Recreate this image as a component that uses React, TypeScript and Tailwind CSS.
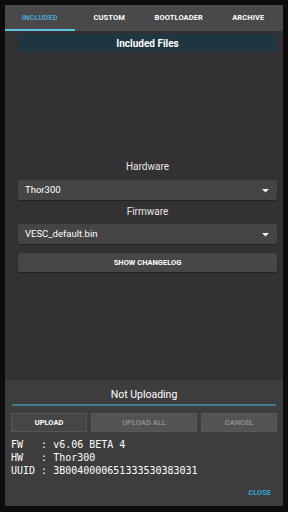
import React from 'react';

const tabs = ['INCLUDED', 'CUSTOM', 'BOOTLOADER', 'ARCHIVE'];

const Combo: React.FC<{ value: string }> = ({ value }) => (
  <div className="flex h-[20px] items-center justify-between rounded-[2px] bg-[#454445] pl-[7px] pr-[7px] shadow-[0_1px_1px_rgba(0,0,0,0.35)]">
    <span className="text-[9.5px] text-white">{value}</span>
    <svg width="7" height="5" viewBox="0 0 7 5" className="mr-[1px]">
      <path d="M0 1 L7 1 L3.5 4.5 Z" fill="#f2f2f2" />
    </svg>
  </div>
);

export default function App() {
  return (
    <div className="h-[512px] w-[288px] bg-[#0c0c0c] pl-[5px] pt-[5px]" style={{ fontFamily: 'Roboto, "Noto Sans", sans-serif' }}>
      <div className="flex h-[501px] w-[278px] flex-col bg-[#333133]">
        {/* Tabs */}
        <div className="flex h-[26px] bg-[#4a494a]">
          {tabs.map((t, i) => (
            <div key={t} className="relative flex flex-1 items-center justify-center">
              <span className={`text-[7.5px] font-bold tracking-[0.1px] ${i === 0 ? 'text-[#4aa8d0]' : 'text-white'}`}>{t}</span>
              {i === 0 && <div className="absolute bottom-0 left-0 right-0 h-[2px] bg-[#5cc4e6]" />}
            </div>
          ))}
        </div>

        {/* Included files */}
        <div className="flex flex-1 flex-col pl-[13px] pr-[6px] pt-[3px]">
          <div className="flex h-[18px] items-center justify-center bg-[#1f3641]">
            <span className="text-[10px] font-bold text-white">Included Files</span>
          </div>

          <div className="mt-[108px] text-center text-[10px] leading-[14px] text-[#e6e6e6]">Hardware</div>
          <div className="mt-[6px]">
            <Combo value="Thor300" />
          </div>
          <div className="mt-[5px] text-center text-[10px] leading-[14px] text-[#e6e6e6]">Firmware</div>
          <div className="mt-[5px]">
            <Combo value="VESC_default.bin" />
          </div>
          <div className="mt-[9px] flex h-[19px] items-center justify-center rounded-[2px] bg-[#484748] shadow-[0_1px_1px_rgba(0,0,0,0.35)]">
            <span className="text-[7.5px] font-bold text-white">SHOW CHANGELOG</span>
          </div>
        </div>

        {/* Upload panel */}
        <div className="flex h-[126px] flex-col bg-[#3e3d3e] px-[6px] pt-[8px]">
          <div className="text-center text-[10.5px] leading-[14px] text-white">Not Uploading</div>
          <div className="mx-[1px] mt-[2px] h-[2px] bg-[#3e7e90]" />
          <div className="mt-[7px] flex gap-[4px]">
            <div className="flex h-[19px] w-[76px] items-center justify-center border border-[#575657] bg-[#474647]">
              <span className="text-[7.5px] font-bold text-white">UPLOAD</span>
            </div>
            <div className="flex h-[19px] flex-1 items-center justify-center border border-[#5a595a] bg-[#545354]">
              <span className="text-[7.5px] font-bold text-[#8c8c8c]">UPLOAD ALL</span>
            </div>
            <div className="flex h-[19px] w-[76px] items-center justify-center border border-[#5a595a] bg-[#545354]">
              <span className="text-[7.5px] font-bold text-[#8c8c8c]">CANCEL</span>
            </div>
          </div>
          <div className="mt-[6px] whitespace-pre text-[10px] leading-[13px] text-white" style={{ fontFamily: '"DejaVu Sans Mono", monospace' }}>
            {'FW   : v6.06 BETA 4\nHW   : Thor300\nUUID : 3B0040000651333530383031'}
          </div>
          <div className="mt-auto flex justify-end pb-[8px] pr-[6px]">
            <span className="text-[7.5px] font-bold text-[#3aa3d6]">CLOSE</span>
          </div>
        </div>
      </div>
    </div>
  );
}
